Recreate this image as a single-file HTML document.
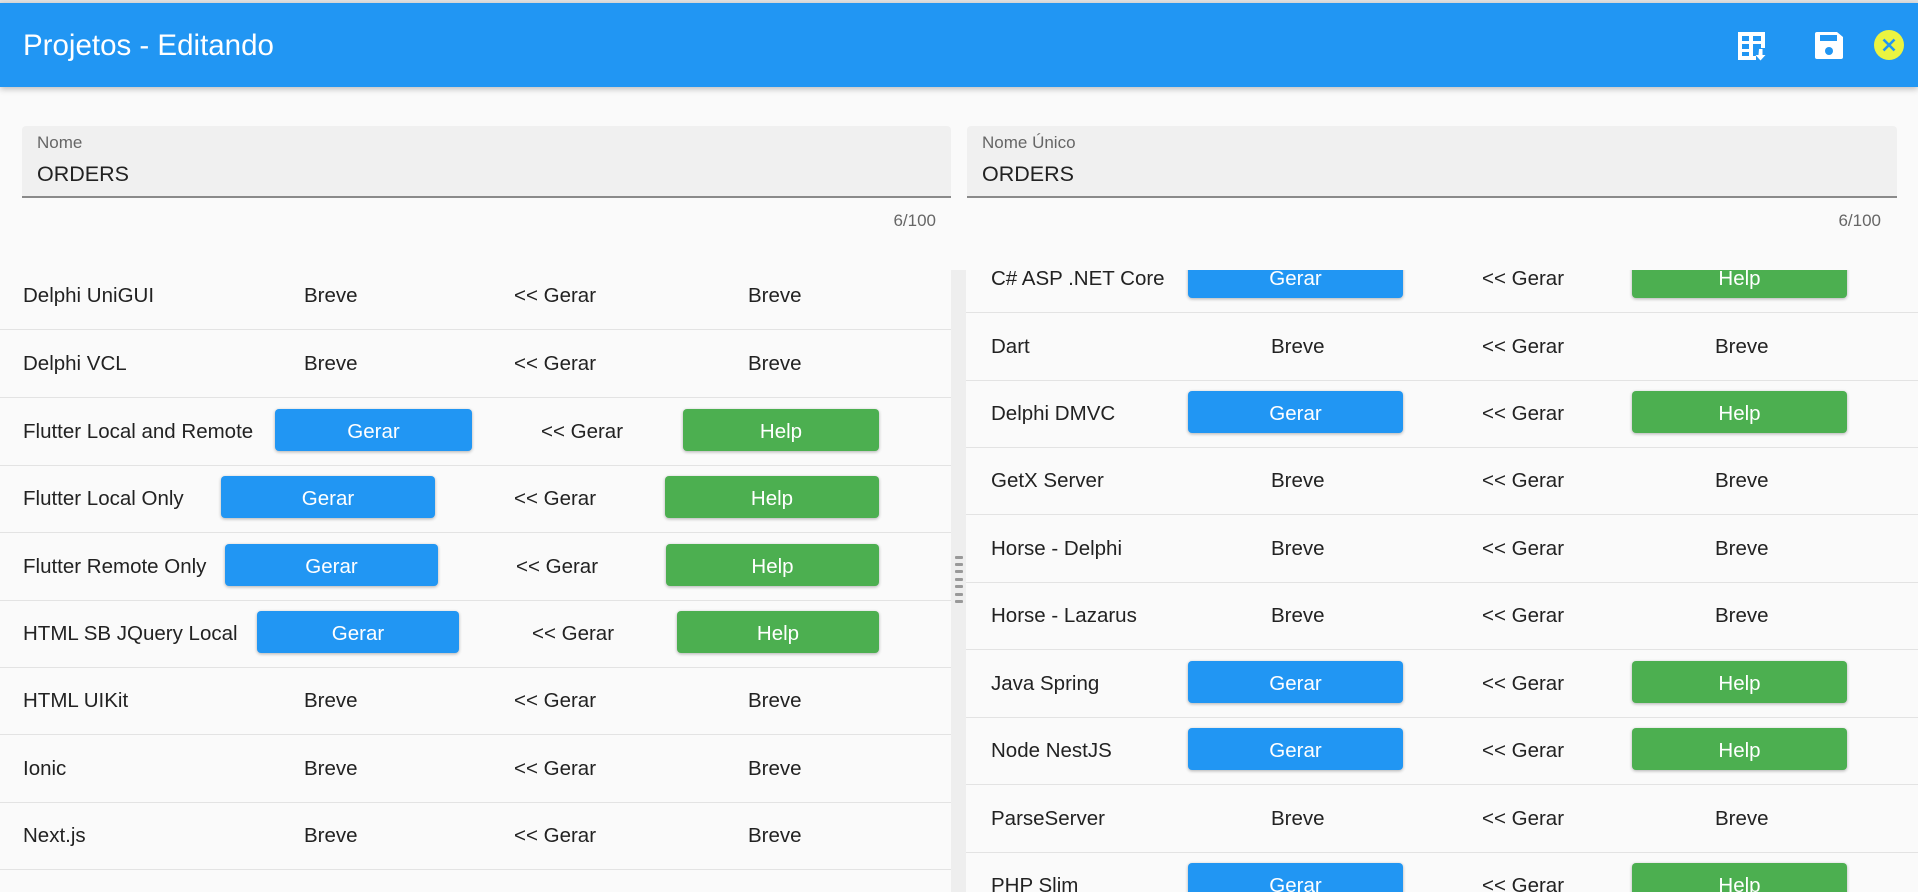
<!DOCTYPE html>
<html><head><meta charset="utf-8"><style>
*{margin:0;padding:0;box-sizing:border-box}
body{width:1918px;height:892px;overflow:hidden;background:#fafafa;font-family:"Liberation Sans",sans-serif;position:relative;color:#222}
.top{position:absolute;left:0;top:0;width:1918px;height:3px;background:#e2e2e2}
.hdr{position:absolute;left:0;top:3px;width:1918px;height:84px;background:#2196f3;box-shadow:0 2px 6px rgba(0,0,0,.25)}
.hdr h1{position:absolute;left:23px;top:27px;font-size:29.5px;font-weight:normal;color:#fff;line-height:32px}
.fld{position:absolute;top:126px;height:72px;background:#f0f0f0;border-radius:4px 4px 0 0;border-bottom:2px solid #8a8a8a}
.fld .l{position:absolute;left:15px;top:7px;font-size:17px;color:#666}
.fld .v{position:absolute;left:15px;top:36px;font-size:21.5px;color:#222}
.cnt{position:absolute;top:211px;font-size:17px;color:#666}
.list{position:absolute;top:270px;height:622px;overflow:hidden}
.row{position:absolute;left:0;right:0;height:67.5px;border-bottom:1.5px solid #e3e3e3;font-size:20.5px}
.row span{position:absolute;top:1px;line-height:66px;white-space:nowrap}
.b{position:absolute;top:11px;height:42px;border-radius:4px;color:#fff;text-align:center;line-height:45px;font-size:20.5px;box-shadow:0 1px 3px rgba(0,0,0,.3)}
.g{background:#2196f3}.h{background:#4caf50}
.sb{position:absolute;left:951px;top:270px;width:15px;height:622px;background:#eeeeee}
.dot{position:absolute;left:4px;width:8px;height:3px;background:#999;border-radius:1px}
</style></head><body>
<div class="top"></div>
<div class="hdr"><h1>Projetos - Editando</h1>
<svg style="position:absolute;left:1738px;top:29px" width="32" height="30" viewBox="0 0 32 30"><path fill="#fff" d="M0 0h27v16h-4V12h-8v12h3v4H0z M4 4v5h7V4z M15 4v5h8V4z M4 12v5h7v-5z M4 20v4h7v-4z"/><path fill="#fff" d="M21 17h3.5v6h3l-5 5.5-5-5.5h3z"/></svg>
<svg style="position:absolute;left:1815px;top:29px" width="28" height="27" viewBox="0 0 28 27"><path fill="#fff" d="M2 0h20l6 5v20a2 2 0 0 1-2 2H2a2 2 0 0 1-2-2V2a2 2 0 0 1 2-2z"/><rect x="5" y="3" width="17" height="6" fill="#2196f3"/><circle cx="14" cy="19" r="4" fill="#2196f3"/></svg>
<svg style="position:absolute;left:1874px;top:27px" width="30" height="30" viewBox="0 0 30 30"><circle cx="15" cy="15" r="15" fill="#ebf441"/><path d="M9.5 9.5l11 11M20.5 9.5l-11 11" stroke="#2196f3" stroke-width="2.6"/></svg>
</div>
<div class="fld" style="left:22px;width:929px"><div class="l">Nome</div><div class="v">ORDERS</div></div>
<div class="cnt" style="right:982px">6/100</div>
<div class="fld" style="left:967px;width:930px"><div class="l">Nome Único</div><div class="v">ORDERS</div></div>
<div class="cnt" style="right:37px">6/100</div>

<div class="list" style="left:0;width:951px">
<div class="row" style="top:-8px"><span style="left:23px">Delphi UniGUI</span><span style="left:304px">Breve</span><span style="left:514px">&lt;&lt; Gerar</span><span style="left:748px">Breve</span></div>
<div class="row" style="top:60px"><span style="left:23px">Delphi VCL</span><span style="left:304px">Breve</span><span style="left:514px">&lt;&lt; Gerar</span><span style="left:748px">Breve</span></div>
<div class="row" style="top:128px"><span style="left:23px">Flutter Local and Remote</span><div class="b g" style="left:275px;width:197px">Gerar</div><span style="left:541px">&lt;&lt; Gerar</span><div class="b h" style="left:683px;width:196px">Help</div></div>
<div class="row" style="top:195px"><span style="left:23px">Flutter Local Only</span><div class="b g" style="left:221px;width:214px">Gerar</div><span style="left:514px">&lt;&lt; Gerar</span><div class="b h" style="left:665px;width:214px">Help</div></div>
<div class="row" style="top:263px"><span style="left:23px">Flutter Remote Only</span><div class="b g" style="left:225px;width:213px">Gerar</div><span style="left:516px">&lt;&lt; Gerar</span><div class="b h" style="left:666px;width:213px">Help</div></div>
<div class="row" style="top:330px"><span style="left:23px">HTML SB JQuery Local</span><div class="b g" style="left:257px;width:202px">Gerar</div><span style="left:532px">&lt;&lt; Gerar</span><div class="b h" style="left:677px;width:202px">Help</div></div>
<div class="row" style="top:397px"><span style="left:23px">HTML UIKit</span><span style="left:304px">Breve</span><span style="left:514px">&lt;&lt; Gerar</span><span style="left:748px">Breve</span></div>
<div class="row" style="top:465px"><span style="left:23px">Ionic</span><span style="left:304px">Breve</span><span style="left:514px">&lt;&lt; Gerar</span><span style="left:748px">Breve</span></div>
<div class="row" style="top:532px"><span style="left:23px">Next.js</span><span style="left:304px">Breve</span><span style="left:514px">&lt;&lt; Gerar</span><span style="left:748px">Breve</span></div>
</div>

<div class="sb"><div class="dot" style="top:286px"></div><div class="dot" style="top:293px"></div><div class="dot" style="top:300px"></div><div class="dot" style="top:308px"></div><div class="dot" style="top:315px"></div><div class="dot" style="top:323px"></div><div class="dot" style="top:330px"></div></div>

<div class="list" style="left:966px;width:952px">
<div class="row" style="top:-25px"><span style="left:25px">C# ASP .NET Core</span><div class="b g" style="left:222px;width:215px">Gerar</div><span style="left:516px">&lt;&lt; Gerar</span><div class="b h" style="left:666px;width:215px">Help</div></div>
<div class="row" style="top:43px"><span style="left:25px">Dart</span><span style="left:305px">Breve</span><span style="left:516px">&lt;&lt; Gerar</span><span style="left:749px">Breve</span></div>
<div class="row" style="top:110px"><span style="left:25px">Delphi DMVC</span><div class="b g" style="left:222px;width:215px">Gerar</div><span style="left:516px">&lt;&lt; Gerar</span><div class="b h" style="left:666px;width:215px">Help</div></div>
<div class="row" style="top:177px"><span style="left:25px">GetX Server</span><span style="left:305px">Breve</span><span style="left:516px">&lt;&lt; Gerar</span><span style="left:749px">Breve</span></div>
<div class="row" style="top:245px"><span style="left:25px">Horse - Delphi</span><span style="left:305px">Breve</span><span style="left:516px">&lt;&lt; Gerar</span><span style="left:749px">Breve</span></div>
<div class="row" style="top:312px"><span style="left:25px">Horse - Lazarus</span><span style="left:305px">Breve</span><span style="left:516px">&lt;&lt; Gerar</span><span style="left:749px">Breve</span></div>
<div class="row" style="top:380px"><span style="left:25px">Java Spring</span><div class="b g" style="left:222px;width:215px">Gerar</div><span style="left:516px">&lt;&lt; Gerar</span><div class="b h" style="left:666px;width:215px">Help</div></div>
<div class="row" style="top:447px"><span style="left:25px">Node NestJS</span><div class="b g" style="left:222px;width:215px">Gerar</div><span style="left:516px">&lt;&lt; Gerar</span><div class="b h" style="left:666px;width:215px">Help</div></div>
<div class="row" style="top:515px"><span style="left:25px">ParseServer</span><span style="left:305px">Breve</span><span style="left:516px">&lt;&lt; Gerar</span><span style="left:749px">Breve</span></div>
<div class="row" style="top:582px"><span style="left:25px">PHP Slim</span><div class="b g" style="left:222px;width:215px">Gerar</div><span style="left:516px">&lt;&lt; Gerar</span><div class="b h" style="left:666px;width:215px">Help</div></div>
</div>
</body></html>
